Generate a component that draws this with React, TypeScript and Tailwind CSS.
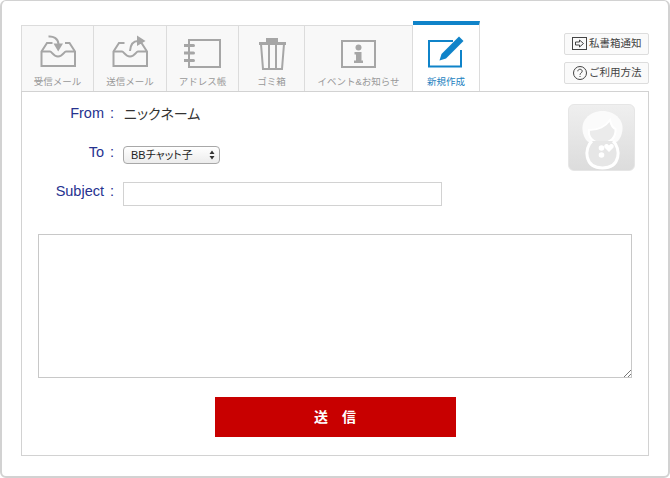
const FONT = "font-['Liberation_Sans','Noto_Sans_CJK_JP',sans-serif]";

function InboxIcon({ out }: { out?: boolean }) {
  return (
    <svg width="38" height="34" viewBox="0 0 38 34" fill="none" stroke="#a6a6a6" strokeWidth="2">
      <path d="M13.5 9 H8 L2.5 17.5 V32 H36 V17.5 L30.5 9 H26" />
      <path d="M2.5 17.5 H11 C13 17.5 14 22.5 19 22.5 C24 22.5 25 17.5 27 17.5 H36" />
      {out ? (
        <>
          <path d="M19 17 C19.5 11 22 7 27 7" />
          <path d="M26 1.5 L34.5 7 L26 12 Z" fill="#a6a6a6" stroke="none" />
        </>
      ) : (
        <>
          <path d="M9.5 2.5 C14 2 19 4 19.5 10" />
          <path d="M14.5 9.5 H24 L19.2 17.5 Z" fill="#a6a6a6" stroke="none" />
        </>
      )}
    </svg>
  );
}

function BookIcon() {
  return (
    <svg width="38" height="30" viewBox="0 0 38 30" fill="none" stroke="#a6a6a6" strokeWidth="2">
      <rect x="5" y="2" width="31" height="27" />
      <path d="M0.5 7.5 H9.5 M0.5 15 H9.5 M0.5 22.5 H9.5" strokeWidth="3" strokeLinecap="round" />
    </svg>
  );
}

function TrashIcon() {
  return (
    <svg className="-mb-[2px]" width="30" height="34" viewBox="0 0 30 34" fill="none" stroke="#a6a6a6" strokeWidth="2">
      <path d="M2 6 H29 V9 H2 Z M9 2 H21 V6 H9 Z" fill="#a6a6a6" stroke="none" />
      <path d="M4 8 L6 33 H25 L27 8 M12 8 V33 M19 8 V33" />
    </svg>
  );
}

function InfoIcon() {
  return (
    <svg width="35" height="28" viewBox="0 0 35 28" fill="none">
      <rect x="1" y="1" width="33" height="26" stroke="#a6a6a6" strokeWidth="2" />
      <circle cx="17.5" cy="7.5" r="3" fill="#a6a6a6" />
      <path d="M13.5 12 H20.5 V20.5 H22 V23 H13 V20.5 H15 V14.5 H13.5 Z" fill="#a6a6a6" />
    </svg>
  );
}

function ComposeIcon() {
  return (
    <svg width="36" height="32" viewBox="0 0 36 32" fill="none">
      <path d="M25 5 H1 V30.5 H33 V14" stroke="#0f83c9" strokeWidth="2" />
      <path d="M31 0.5 L35.5 5 L18 22.5 L11.5 24.5 L13.5 18 Z" fill="#0f83c9" />
    </svg>
  );
}

function Tab({ label, width, children }: { label: string; width: string; children: React.ReactNode }) {
  return (
    <div className={`${width} h-[66px] flex flex-col items-center border-t border-r border-[#dcdcdc] bg-[#f8f8f8]`}>
      <div className="h-[42px] flex items-end justify-center">{children}</div>
      <span className="text-[9.5px] leading-[13px] mt-[7px] text-[#999]">{label}</span>
    </div>
  );
}

function SideButton({ label, children }: { label: string; children: React.ReactNode }) {
  return (
    <div className="w-[85px] h-[22px] flex items-center gap-[1px] pl-[7px] border border-[#ddd] rounded-[2px] bg-[#fafafa] text-[10.5px] text-[#444]">
      {children}
      <span>{label}</span>
    </div>
  );
}

function Avatar() {
  return (
    <div className="absolute right-[13px] top-[12px] w-[67px] h-[67px] rounded-[6px] bg-gradient-to-b from-[#efefef] to-[#dcdcdc] border border-[#e6e6e6]">
      <svg width="65" height="65" viewBox="0 0 65 65" fill="none">
        <path d="M15 31 C9 16 21 6 33.5 6 C46 6 58 16 52 31 C50 36 47 38 44 38 H23 C20 38 17 36 15 31 Z" fill="#fbfbfb" />
        <path d="M20 25 C29 25 37 21 41 15 C42 20 44 23 46.5 24 C47 32 42 38 33 38 C24 38 19 32 20 25 Z" fill="#ebebeb" stroke="#fff" strokeWidth="2" />
        <path d="M23 36 C15 43 15 63 33.5 63 C52 63 52 43 44 36" fill="#e6e6e6" stroke="#fff" strokeWidth="3" />
        <circle cx="32.5" cy="43" r="2.8" fill="#fff" />
        <circle cx="32.5" cy="50" r="2.8" fill="#fff" />
        <path d="M40 47 L35.5 42.5 C34 39 38.5 37.5 40 40.5 C41.5 37.5 46 39 44.5 42.5 Z" fill="#fff" />
      </svg>
    </div>
  );
}

function FormLabel({ children, className = "" }: { children: React.ReactNode; className?: string }) {
  return (
    <span className={`w-[93px] flex justify-end text-[14.5px] text-[#26328f] shrink-0 ${className}`}>
      <span>{children}</span>
      <span className="w-[11px] text-right pr-[1px]">:</span>
    </span>
  );
}

export default function App() {
  return (
    <div className={`${FONT} w-[670px] h-[478px] bg-white border-2 border-t border-[#d2d2d2] rounded-[6px] pt-[20px] pl-[19px] pr-[19px]`}>
      <div className="flex items-end justify-between w-[628px]">
        <div className="flex items-end">
          <div className="flex border-l border-[#dcdcdc]">
            <Tab label="受信メール" width="w-[72px]"><InboxIcon /></Tab>
            <Tab label="送信メール" width="w-[73px]"><InboxIcon out /></Tab>
            <Tab label="アドレス帳" width="w-[72px]"><BookIcon /></Tab>
            <Tab label="ゴミ箱" width="w-[66px]"><TrashIcon /></Tab>
            <Tab label="イベント&お知らせ" width="w-[108px]"><InfoIcon /></Tab>
          </div>
          <div className="w-[67px] h-[71px] -mb-[1px] flex flex-col items-center border-t-4 border-t-[#0f83c9] border-r border-[#dcdcdc] bg-white relative">
            <div className="h-[43px] flex items-end justify-center"><ComposeIcon /></div>
            <span className="text-[9.5px] leading-[13px] mt-[7px] text-[#1b7fc0]">新規作成</span>
          </div>
        </div>
        <div className="flex flex-col gap-[7px] mb-[7px]">
          <SideButton label="私書箱通知">
            <svg width="16" height="14" viewBox="0 0 16 14" fill="none" stroke="#444">
              <rect x="0.5" y="0.5" width="14" height="12" />
              <path d="M3.5 5 H7.5 V3 L11.5 6.5 L7.5 10 V8 H3.5 Z" />
            </svg>
          </SideButton>
          <SideButton label="ご利用方法">
            <svg width="16" height="16" viewBox="0 0 16 16" fill="none" stroke="#444">
              <circle cx="8" cy="8" r="6.5" />
              <path d="M5.8 6.3 C5.8 3.6 10.2 3.6 10.2 6.2 C10.2 8 8 7.8 8 9.8 M8 11 V12" />
            </svg>
          </SideButton>
        </div>
      </div>

      <div className="relative w-[628px] h-[365px] border border-[#d2d2d2] bg-white">
        <Avatar />
        <div className="h-[132px] flex flex-col">
          <div className="flex items-center h-[20px] mt-[12px]">
            <FormLabel>From</FormLabel>
            <span className="ml-[9px] text-[14px] text-[#333] [font-feature-settings:'palt']">ニックネーム</span>
          </div>
          <div className="flex items-center h-[20px] mt-[21px]">
            <FormLabel className="pb-[4px]">To</FormLabel>
            <div className="ml-[8px] w-[97px] h-[18px] flex items-center justify-between pl-[7px] pr-[4px] border border-[#a8a8a8] rounded-[4px] bg-gradient-to-b from-white to-[#ececec] text-[11px] text-[#222] [font-feature-settings:'palt']">
              <span>BBチャット子</span>
              <svg width="6" height="10" viewBox="0 0 6 10" fill="#333">
                <path d="M3 0.5 L5.5 4 H0.5 Z M3 9.5 L0.5 6 H5.5 Z" />
              </svg>
            </div>
          </div>
          <div className="flex items-center h-[24px] mt-[17px]">
            <FormLabel className="pb-[5px]">Subject</FormLabel>
            <div className="ml-[8px] w-[319px] h-[24px] border border-[#d2d2d2] bg-white" />
          </div>
        </div>
        <div className="ml-[16px] mt-[10px] w-[594px] h-[144px] border border-[#c8c8c8] bg-white relative">
          <svg className="absolute right-0 bottom-0" width="8" height="8" viewBox="0 0 8 8" stroke="#777">
            <path d="M1 8 L8 1 M5 8 L8 5" />
          </svg>
        </div>
        <div className="flex justify-center mt-[19px]">
          <div className="w-[241px] h-[40px] flex items-center justify-center bg-[#c80000] text-white text-[14px] font-bold whitespace-pre">送　信</div>
        </div>
      </div>
    </div>
  );
}
